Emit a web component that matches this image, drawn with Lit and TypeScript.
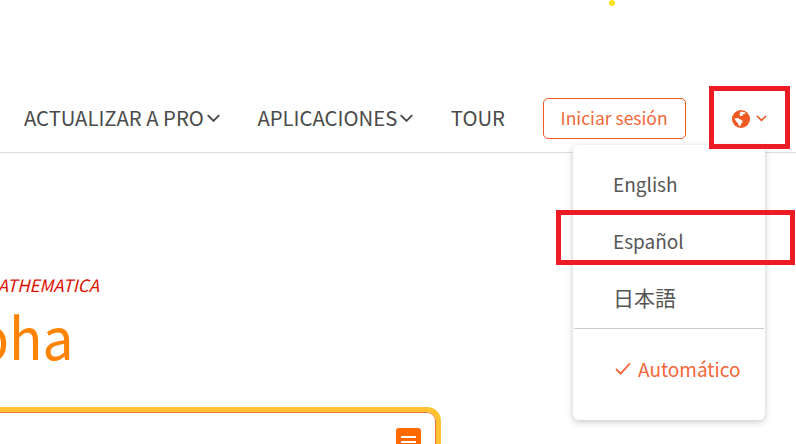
import { LitElement, html, css, svg } from "lit";
import { customElement } from "lit/decorators.js";

const chevron = (cls: string) => html`<svg class=${cls} viewBox="0 0 12 8" fill="none" stroke="currentColor" stroke-width="1.8" stroke-linecap="round" stroke-linejoin="round"><path d="M1.2 1.4 6 6.2l4.8-4.8"/></svg>`;

@customElement("app-root")
export class AppRoot extends LitElement {
  static styles = css`
    :host {
      display: block;
      position: relative;
      width: 796px;
      height: 444px;
      overflow: hidden;
      background: #fff;
      font-family: "Noto Sans CJK JP", "Noto Sans", sans-serif;
      color: #4a4a4a;
    }
    .dot {
      position: absolute;
      left: 609px;
      top: 0;
      width: 6px;
      height: 6px;
      border-radius: 50%;
      background: #ffe11a;
    }
    header {
      box-sizing: border-box;
      height: 153px;
      border-bottom: 1px solid #dedede;
      padding: 98px 0 0 24px;
      display: flex;
      align-items: flex-start;
      gap: 37.6px;
    }
    .nav {
      display: flex;
      align-items: center;
      height: 39px;
      font-size: 20.3px;
      line-height: 39px;
      white-space: nowrap;
    }
    .chev { width: 13px; height: 9px; margin: 2px 0 0 3px; color: #4a4a4a; }
    .login {
      box-sizing: border-box;
      width: 143px;
      height: 41px;
      border: 1px solid #f05a28;
      border-radius: 5px;
      color: #f4673a;
      font-size: 17.5px;
      line-height: 37px;
      text-align: center;
    }
    .lang {
      display: flex;
      align-items: center;
      height: 41px;
      margin-left: 9px;
      color: #f05a22;
    }
    .globe { width: 18px; height: 18px; }
    .lang .chev { width: 11px; height: 7px; margin: 0 0 0 6px; color: #f05a22; }
    .menu {
      position: absolute;
      left: 573px;
      top: 145px;
      box-sizing: border-box;
      width: 192px;
      height: 275px;
      background: #fff;
      border-radius: 6px;
      box-shadow: 0 2px 7px rgba(0, 0, 0, 0.22);
      padding-top: 10px;
      font-size: 19px;
    }
    .item {
      height: 57px;
      line-height: 57px;
      padding-left: 40px;
      color: #555;
    }
    .item.ja { font-size: 21px; }
    .sep { height: 1px; margin: 2px 1px 0; background: #ccc; }
    .auto {
      display: flex;
      align-items: center;
      height: 78px;
      padding-left: 42px;
      color: #f4673a;
    }
    .check { width: 16px; height: 13px; margin-right: 7px; }
    main {
      box-sizing: border-box;
      width: 441px;
      padding-top: 120px;
      display: flex;
      flex-direction: column;
      align-items: flex-end;
    }
    .tag {
      align-self: flex-start;
      width: 99px;
      display: flex;
      justify-content: flex-end;
      font-size: 17px;
      line-height: 24px;
      font-style: italic;
      color: #dc1000;
      white-space: nowrap;
    }
    .brand {
      align-self: flex-start;
      width: 74px;
      display: flex;
      justify-content: flex-end;
      font-size: 58px;
      line-height: 76px;
      color: #ff8200;
      white-space: nowrap;
    }
    .brand span {
      flex: none;
      transform: scaleX(0.95);
      transform-origin: right center;
    }
    .search {
      box-sizing: border-box;
      position: relative;
      width: 470px;
      height: 60px;
      margin-top: 34px;
      flex: none;
      border: 5px solid #ffc233;
      border-radius: 14px;
      box-shadow: inset 0 0 0 1px #f0703a;
    }
    .go {
      position: absolute;
      right: 15px;
      top: 16px;
      width: 25px;
      height: 30px;
      border-radius: 3px;
      background: #ff6a00;
    }
    .go::before {
      content: "";
      position: absolute;
      left: 5px;
      right: 5px;
      top: 8px;
      height: 2px;
      background: #fff;
      box-shadow: 0 5px 0 #fff;
    }
    .mark {
      position: absolute;
      box-sizing: border-box;
      border: 5px solid #ed1c24;
    }
    .m1 { left: 709px; top: 86px; width: 81px; height: 63px; }
    .m2 { left: 556px; top: 210px; width: 239px; height: 55px; }
  `;

  render() {
    return html`
      <div class="dot"></div>
      <header>
        <div class="nav">ACTUALIZAR A PRO${chevron("chev")}</div>
        <div class="nav">APLICACIONES${chevron("chev")}</div>
        <div class="nav">TOUR</div>
        <div class="login">Iniciar sesión</div>
        <div class="lang">
          <svg class="globe" viewBox="0 0 18 18">
            <circle cx="9" cy="9" r="9" fill="currentColor"/>
            ${svg`<path fill="#fff" d="M2.4 8.6 6 8l2.4 1.6 1.8.6.4 2-1.6 1.8-.6 2.2-1.6-.4-.8-2.6-1.8-1.6ZM8.6 1.6l4.4.6.6 1.2-2.4.8-.6 1.6-2.2.4-1-1.8Z"/>`}
          </svg>
          ${chevron("chev")}
        </div>
      </header>
      <main>
        <div class="tag">MATHEMATICA</div>
        <div class="brand"><span>Alpha</span></div>
        <div class="search"><div class="go"></div></div>
      </main>
      <div class="menu">
        <div class="item">English</div>
        <div class="item">Español</div>
        <div class="item ja">日本語</div>
        <div class="sep"></div>
        <div class="auto">
          <svg class="check" viewBox="0 0 16 13" fill="none" stroke="currentColor" stroke-width="1.8"><path d="M1 7l4.6 4.6L15 1.4"/></svg>
          Automático
        </div>
      </div>
      <div class="mark m1"></div>
      <div class="mark m2"></div>
    `;
  }
}
